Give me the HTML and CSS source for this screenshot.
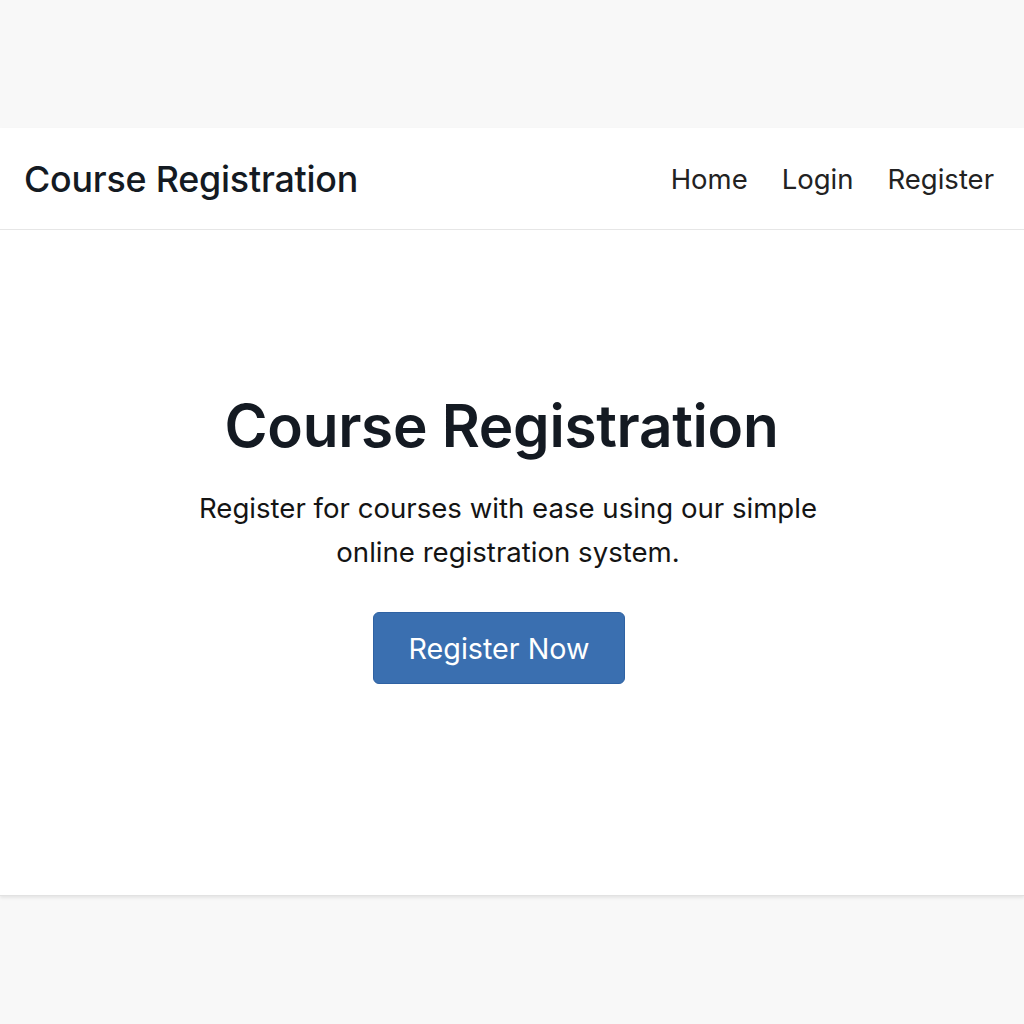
FILE: index.html
```html
<!DOCTYPE html>
<html lang="en">
<head>
<meta charset="utf-8">
<title>Course Registration</title>
<link rel="stylesheet" href="styles.css">
</head>
<body>
<div class="top-band"></div>
<div class="page">
  <header class="navbar">
    <div class="brand">Course Registration</div>
    <nav class="nav-links">
      <a href="#">Home</a>
      <a href="#">Login</a>
      <a href="#">Register</a>
    </nav>
  </header>
  <main class="hero">
    <h1 class="hero-title">Course Registration</h1>
    <p class="hero-text">Register for courses with ease using our simple<br>online registration system.</p>
    <a class="btn" href="#">Register Now</a>
  </main>
</div>
<div class="bottom-band"></div>
</body>
</html>
```

FILE: styles.css
```css
* { box-sizing: border-box; }
html, body { margin: 0; padding: 0; }
body {
  background: #f8f8f8;
  font-family: Inter, "Noto Sans", sans-serif;
  color: #111820;
}
.top-band { height: 128px; }
.page {
  background: #ffffff;
  box-shadow: 0 2px 3px rgba(0,0,0,0.08);
  border-bottom: 1px solid #e2e2e2;
}
.navbar {
  height: 102px;
  display: flex;
  align-items: center;
  justify-content: space-between;
  padding: 0 30px 0 24px;
  border-bottom: 1px solid #e6e6e6;
}
.brand {
  font-size: 35.8px;
  font-weight: 500;
  color: #141a22;
  letter-spacing: -0.2px;
}
.nav-links {
  display: flex;
  gap: 34px;
}
.nav-links a {
  font-size: 27.5px;
  color: #222;
  text-decoration: none;
}
.hero {
  height: 665px;
  display: flex;
  flex-direction: column;
  align-items: center;
  padding: 160px 16px 0 0;
  text-align: center;
}
.hero-title {
  margin: 0 5px 0 0;
  font-size: 58.5px;
  font-weight: 600;
  line-height: 72px;
  color: #141a22;
  letter-spacing: -0.3px;
}
.hero-text {
  margin: 24px 0 0 8px;
  font-size: 27.6px;
  line-height: 44px;
  color: #141414;
}
.btn {
  margin: 38px 10px 0 0;
  width: 252px;
  height: 72px;
  display: flex;
  align-items: center;
  justify-content: center;
  background: #3a6fb0;
  border: 1px solid #2f62a3;
  border-radius: 6px;
  color: #ffffff;
  font-size: 28.7px;
  text-decoration: none;
}
.bottom-band { height: 130px; }
```
